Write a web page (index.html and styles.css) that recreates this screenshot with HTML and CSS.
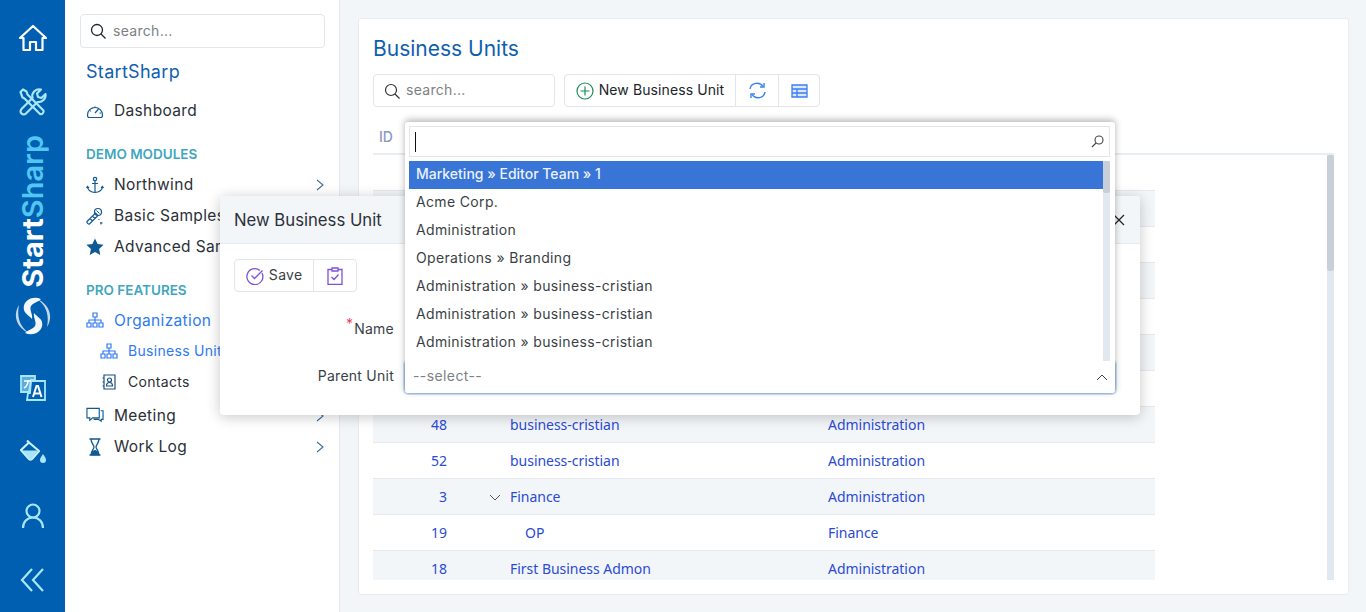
FILE: index.html
```html
<!DOCTYPE html>
<html lang="en">
<head>
<meta charset="UTF-8" />
<title>Business Units</title>
<link rel="stylesheet" href="styles.css">
</head>
<body>
<div class="rail">
    <div class="rail-item"><svg width="30" height="30" viewBox="0 0 30 30" fill="none" stroke="#fff" stroke-width="2.2" stroke-linejoin="round"><path d="M2 15 15 3l13 12h-3.500v12H18v-8h-6v8H5.500V15z"/></svg></div>
    <div class="rail-item"><svg width="30" height="30" viewBox="0 0 30 30" fill="none" stroke="#a8e6fa" stroke-width="2.200" stroke-linejoin="round" stroke-linecap="round"><path d="M2.500 5 5 2.500l3.500 2 1 3 16 16a2.800 2.800 0 0 1-3.500 3.500L6.500 11.500l-2-1z"/><path d="M27.500 7l-4 4-3.500-1-1-3.500 4-4a7 7 0 0 0-8.500 8.500L3.500 22a3 3 0 0 0 4.500 4.500l11.500-11.500a7 7 0 0 0 8-8z"/></svg></div>
    <div class="rail-brand"><span class="brand-text">Start<span class="brand-accent">Sharp</span></span></div>
    <div class="rail-logo"><svg width="40" height="40" viewBox="0 0 40 40" fill="#f2f8fd"><path d="M28 3C18-1 9 6 11 14c1 4 6 6 8 9 1-5-3-9-1-13 2-3 7-4 10-7z"/><path d="M12 37c10 4 19-3 17-11-1-4-6-6-8-9-1 5 3 9 1 13-2 3-7 4-10 7z"/><path d="M6 9C-1 20 4 33 18 38 9 33 3 24 6 9z" opacity=".8"/><path d="M34 31c7-11 2-24-12-29 9 5 15 14 12 29z" opacity=".8"/><g fill="#0a66b3"><circle cx="20" cy="13" r="1.300"/><circle cx="24" cy="16" r="1.300"/><circle cx="16" cy="24" r="1.300"/><circle cx="20" cy="27" r="1.300"/></g></svg></div>
    <div class="rail-item"><svg width="28" height="28" viewBox="0 0 28 28" fill="none" stroke="#a8e6fa" stroke-width="1.800" stroke-linejoin="miter"><path d="M2 2h14v4h-4l-2 12H2z" fill="#5aaede"/><path d="M12 7h14v19H8l1-7h2z"/><path d="M5 7h7M9 6c0 4-2 7-4 8" stroke="#fff" stroke-width="1.600"/><path d="M14 23l3.500-11h1.500l3.500 11M15.500 19.500h5" stroke="#fff" stroke-width="2"/></svg></div>
    <div class="rail-item"><svg width="28" height="28" viewBox="0 0 28 28" fill="none" stroke="#c9f0fc" stroke-width="2.200" stroke-linejoin="round"><path d="M8 2.500 10.500 5M10 4.500 2 12l8 9c1 1 2 1 3 0l7-8z"/><path d="M3.500 12.500h15.500L13 20.500c-1 1-2 1-3 0z" fill="#a8e6fa" stroke="none"/><path d="M24 16c-2 3-3 4.500-3 6a3 3 0 0 0 6 0c0-1.500-1-3-3-6z" fill="#a8e6fa" stroke="none"/></svg></div>
    <div class="rail-item"><svg width="28" height="28" viewBox="0 0 28 28" fill="none" stroke="#a8e6fa" stroke-width="2.200"><circle cx="14" cy="9" r="6.500"/><path d="M4 26c0-6 4-10.500 10-10.500S24 20 24 26"/></svg></div>
    <div class="rail-item"><svg width="26" height="26" viewBox="0 0 26 26" fill="none" stroke="#a8e6fa" stroke-width="2.200"><path d="M12 2 2 13l10 11M23 2 13 13l10 11"/></svg></div>
</div>

<div class="sidebar">
    <div class="search side-search">
        <svg class="search-icon" width="16" height="16" viewBox="0 0 16 16" fill="none" stroke="#1c2733" stroke-width="1.300"><circle cx="7" cy="7" r="5.500"/><path d="m11 11 4.500 4.500"/></svg>
        <span class="placeholder">search...</span>
    </div>
    <div class="side-title">StartSharp</div>
    <div class="nav-item nav-dash">
        <svg class="nav-icon" width="18" height="18" viewBox="0 0 18 18" fill="none" stroke="#0f5a94" stroke-width="1.200"><path d="M1.500 13a7.500 7.500 0 1 1 15 0c0 1.500-.5 2.500-1.500 2.500H3c-1 0-1.500-1-1.500-2.500z"/><path d="M9 11l3.500-4M4 9h1M13.500 11H15M6 6l.500.500M9 4.500V5"/></svg>
        Dashboard
    </div>
    <div class="nav-head nav-head-demo">DEMO MODULES</div>
    <div class="nav-item">
        <svg class="nav-icon" width="18" height="18" viewBox="0 0 18 18" fill="none" stroke="#0f5a94" stroke-width="1.200"><circle cx="9" cy="3" r="1.700"/><path d="M9 5v11.500M6 7.500h6M1.500 10.500c0 3.500 3.500 6 7.500 6s7.500-2.500 7.500-6M.5 12l1-1.500L3 12M15 12l1.500-1.500L17.500 12"/></svg>
        Northwind
        <svg class="chev" width="8" height="12" viewBox="0 0 8 12" fill="none" stroke="#3f6f9b" stroke-width="1.100"><path d="m1 1 6 5-6 5"/></svg>
    </div>
    <div class="nav-item">
        <svg class="nav-icon" width="18" height="18" viewBox="0 0 18 18" fill="none" stroke="#0f5a94" stroke-width="1.200"><path d="M1 14.500 9.500 6l2.500 2.500L3.500 17c-1 .5-3-1.500-2.500-2.500zM4 11.500l2.500 2.500M6.500 9l2.500 2.500"/><circle cx="12" cy="5" r="3.500"/><path d="M10.500 3.500l3 3M15 15v2.500M14 16h2.500M12.500 12.500h1" stroke-width="1"/></svg>
        Basic Samples
    </div>
    <div class="nav-item">
        <svg class="nav-icon" width="18" height="18" viewBox="0 0 18 18" fill="#0f5a94"><path d="m9 .5 2.600 5.600 6 .7-4.500 4.100 1.200 6L9 14l-5.300 2.900 1.200-6L.4 6.800l6-.7z"/></svg>
        Advanced Samples
    </div>
    <div class="nav-head nav-head-pro">PRO FEATURES</div>
    <div class="nav-item nav-active nav-org">
        <svg class="nav-icon" width="18" height="16" viewBox="0 0 18 16" fill="none" stroke="#2f7bf0" stroke-width="1.200"><path d="M7 1h4v4H7zM1 11h4v4H1zM7 11h4v4H7zM13 11h4v4h-4zM9 5v6M3 11V8h12v3"/></svg>
        Organization
    </div>
    <div class="nav-sub nav-active">
        <svg class="nav-icon" width="18" height="16" viewBox="0 0 18 16" fill="none" stroke="#2f7bf0" stroke-width="1.200"><path d="M7 1h4v4H7zM1 11h4v4H1zM7 11h4v4H7zM13 11h4v4h-4zM9 5v6M3 11V8h12v3"/></svg>
        Business Units
    </div>
    <div class="nav-sub nav-sub-last">
        <svg class="nav-icon" width="18" height="16" viewBox="0 0 18 16" fill="none" stroke="#1d4f80" stroke-width="1.200"><path d="M4 1h11v14H4zM2.500 4h2M2.500 8h2M2.500 12h2"/><circle cx="9.500" cy="6" r="2"/><path d="M6.500 12c0-2 1-3.500 3-3.500s3 1.500 3 3.500z"/></svg>
        Contacts
    </div>
    <div class="nav-item">
        <svg class="nav-icon" width="19" height="18" viewBox="0 0 19 18" fill="none" stroke="#0f5a94" stroke-width="1.200"><path d="M1 1h13v10H7l-3 2.500V11H1zM15.500 3.500H18v9h-2v2l-3-2H8"/></svg>
        Meeting
        <svg class="chev" width="8" height="12" viewBox="0 0 8 12" fill="none" stroke="#3f6f9b" stroke-width="1.100"><path d="m1 1 6 5-6 5"/></svg>
    </div>
    <div class="nav-item">
        <svg class="nav-icon" width="18" height="18" viewBox="0 0 18 18" fill="none" stroke="#0f5a94" stroke-width="1.300"><path d="M3.500 1h11M3.500 17h11M5 1c0 4 3 6 3 8s-3 4-3 8M13 1c0 4-3 6-3 8s3 4 3 8"/><path d="M5.500 16.500c0-2 2-3.500 3.500-4 1.500.5 3.500 2 3.500 4z" fill="#0f5a94"/></svg>
        Work Log
        <svg class="chev" width="8" height="12" viewBox="0 0 8 12" fill="none" stroke="#3f6f9b" stroke-width="1.100"><path d="m1 1 6 5-6 5"/></svg>
    </div>
</div>

<div class="main">
    <div class="card">
        <h1 class="page-title">Business Units</h1>
        <div class="toolbar">
            <div class="search main-search">
                <svg class="search-icon" width="16" height="16" viewBox="0 0 16 16" fill="none" stroke="#333" stroke-width="1.200"><circle cx="7" cy="7" r="5.500"/><path d="m11 11 4.500 4.500"/></svg>
                <span class="placeholder">search...</span>
            </div>
            <div class="btn-group">
                <div class="btn btn-new">
                    <svg width="18" height="18" viewBox="0 0 18 18" fill="none" stroke="#1f8a5b" stroke-width="1.200"><circle cx="9" cy="9" r="8"/><path d="M9 4.500v9M4.500 9h9"/></svg>
                    <span class="btn-text">New Business Unit</span>
                </div>
                <div class="btn btn-refresh">
                    <svg width="17" height="17" viewBox="0 0 17 17" fill="none" stroke="#3b82f0" stroke-width="1.400"><path d="M1 7a7 6.500 0 0 1 13-2.500M16 10a7 6.500 0 0 1-13 2.500"/><path d="M15 1v4h-4M2 16v-4h4"/></svg>
                </div>
                <div class="btn btn-cols">
                    <svg width="17" height="14" viewBox="0 0 17 14" fill="#dbe7fd" stroke="#3b7df0" stroke-width="1.300"><path d="M1 1h15v12H1zM1 5h15M1 9h15M6 5v8"/></svg>
                </div>
            </div>
        </div>
        <div class="grid">
            <div class="grid-head"><span class="col-id-head">ID</span></div>
            <div class="grid-body">
                <div class="rows">
                    <div class="row"></div>
                    <div class="row"></div>
                    <div class="row"></div>
                    <div class="row"></div>
                    <div class="row"></div>
                    <div class="row"></div>
                    <div class="row"></div>
                    <div class="row"><span class="c-id">48</span><span class="c-name">business-cristian</span><span class="c-parent">Administration</span></div>
                    <div class="row"><span class="c-id">52</span><span class="c-name">business-cristian</span><span class="c-parent">Administration</span></div>
                    <div class="row"><span class="c-id">3</span><span class="c-name"><svg class="tree-chev" width="12" height="7" viewBox="0 0 12 7" fill="none" stroke="#555" stroke-width="1"><path d="m1 1 5 5 5-5"/></svg>Finance</span><span class="c-parent">Administration</span></div>
                    <div class="row"><span class="c-id">19</span><span class="c-name c-child">OP</span><span class="c-parent">Finance</span></div>
                    <div class="row"><span class="c-id">18</span><span class="c-name">First Business Admon</span><span class="c-parent">Administration</span></div>
                </div>
                <div class="vscroll"><div class="vthumb"></div></div>
            </div>
        </div>
    </div>
</div>

<div class="modal">
    <div class="modal-head">
        <span class="modal-title">New Business Unit</span>
        <svg width="14" height="14" viewBox="0 0 14 14" fill="none" stroke="#222" stroke-width="1.200"><path d="m2 2 10 10M12 2 2 12"/></svg>
    </div>
    <div class="modal-body">
        <div class="btn-group modal-tools">
            <div class="btn btn-save">
                <svg width="18" height="18" viewBox="0 0 18 18" fill="none" stroke="#7c52d6" stroke-width="1.300"><path d="M16 6a8 8 0 1 1-2-2.500"/><path d="m5.500 8.500 3 3L16.500 3.500"/></svg>
                <span class="btn-text">Save</span>
            </div>
            <div class="btn btn-clip">
                <svg width="16" height="18" viewBox="0 0 16 18" fill="none" stroke="#7c52d6" stroke-width="1.300"><path d="M5 2.500H1v15h14v-15h-4M5 1h6v3H5zM4.500 10l2.500 2.500 4.500-5"/></svg>
            </div>
        </div>
        <div class="field field-name">
            <label class="field-label"><span class="req">*</span>Name</label>
        </div>
        <div class="field">
            <label class="field-label">Parent Unit</label>
            <div class="select">
                <span class="select-value">--select--</span>
                <svg class="select-chev" width="12" height="7" viewBox="0 0 12 7" fill="none" stroke="#444" stroke-width="1"><path d="m1 6 5-5 5 5"/></svg>
                <div class="drop">
                    <div class="drop-search">
                        <span class="caret"></span>
                        <svg width="13" height="13" viewBox="0 0 13 13" fill="none" stroke="#444" stroke-width="1.100"><circle cx="8" cy="5" r="4"/><path d="M5 8 1 12"/></svg>
                    </div>
                    <div class="drop-list">
                        <div class="drop-items">
                            <div class="drop-item drop-sel">Marketing » Editor Team » 1</div>
                            <div class="drop-item">Acme Corp.</div>
                            <div class="drop-item">Administration</div>
                            <div class="drop-item">Operations » Branding</div>
                            <div class="drop-item">Administration » business-cristian</div>
                            <div class="drop-item">Administration » business-cristian</div>
                            <div class="drop-item">Administration » business-cristian</div>
                        </div>
                        <div class="drop-scroll"><div class="drop-thumb"></div></div>
                    </div>
                </div>
            </div>
        </div>
    </div>
</div>
</body>
</html>
```

FILE: styles.css
```css
* {
    box-sizing: border-box;
}

html, body {
    height: 100%;
}

body {
    margin: 0;
    display: flex;
    height: 612px;
    overflow: hidden;
    background-color: #f3f6f9;
    font-family: Inter, "Liberation Sans", sans-serif;
    font-size: 14px;
    color: #2b3038;
}

/* left rail */
.rail {
    width: 65px;
    flex: none;
    padding-top: 6px;
    background-color: #005fb0;
    display: flex;
    flex-direction: column;
    align-items: center;
}

.rail-item {
    height: 64px;
    width: 100%;
    flex: none;
    display: flex;
    align-items: center;
    justify-content: center;
}

.rail-brand {
    height: 154px;
    flex: none;
    display: flex;
    align-items: center;
    justify-content: center;
}

.brand-text {
    writing-mode: vertical-rl;
    transform: rotate(180deg);
    font-size: 29px;
    font-weight: 700;
    color: #fff;
    line-height: 1;
}

.brand-accent {
    color: #52c6f2;
    font-weight: 600;
}

.rail-logo {
    height: 68px;
    flex: none;
    display: flex;
    align-items: center;
    justify-content: center;
    padding-bottom: 12px;
}

/* sidebar */
.sidebar {
    width: 275px;
    flex: none;
    background-color: #fff;
    border-right: 1px solid #e6eaef;
    padding: 14px 14px 0 15px;
}

.search {
    display: flex;
    align-items: center;
    border: 1px solid #e2e5e9;
    border-radius: 4px;
    background-color: #fff;
}

.side-search {
    height: 34px;
    padding-left: 9px;
}

.main-search {
    width: 182px;
    height: 33px;
    padding-left: 10px;
}

.search-icon {
    margin-right: 7px;
    flex: none;
}

.main-search .search-icon {
    margin-right: 6px;
}

.placeholder {
    color: #7d7f85;
    font-size: 14px;
    letter-spacing: 0.3px;
    padding-bottom: 2px;
}

.side-title {
    margin: 13px 0 0 6px;
    height: 22px;
    line-height: 22px;
    font-size: 18px;
    color: #0f5fb0;
    letter-spacing: 0.3px;
}

.nav-item {
    display: flex;
    align-items: center;
    height: 31px;
    padding-left: 6px;
    font-size: 15.500px;
    letter-spacing: 0.35px;
    white-space: nowrap;
}

.nav-dash {
    margin-top: 12px;
}

.nav-org {
    height: 30px;
}

.nav-icon {
    width: 18px;
    margin-right: 10px;
    flex: none;
}

.chev {
    margin-left: auto;
    margin-right: 1px;
}

.nav-head {
    height: 20px;
    line-height: 20px;
    padding-left: 6px;
    font-size: 13.500px;
    font-weight: 600;
    color: #3fa7bd;
}

.nav-head-demo {
    margin-top: 18px;
    margin-bottom: 5px;
}

.nav-head-pro {
    margin-top: 18px;
    margin-bottom: 5px;
}

.nav-sub {
    display: flex;
    align-items: center;
    height: 31px;
    padding-left: 20px;
    font-size: 14px;
    letter-spacing: 0.3px;
    white-space: nowrap;
}

.nav-sub-last {
    margin-bottom: 3px;
}

.nav-active {
    color: #2f7bf0;
}

/* main */
.main {
    flex: 1;
    padding: 18px 17px 17px 18px;
}

.card {
    height: 577px;
    background-color: #fff;
    border: 1px solid #e8ecf1;
    border-radius: 3px;
    padding: 0 14px 15px 14px;
}

.page-title {
    margin: 15px 0 0 0;
    height: 29px;
    line-height: 29px;
    font-size: 21px;
    font-weight: 400;
    color: #0f5fb0;
}

.toolbar {
    display: flex;
    gap: 9px;
    margin-top: 11px;
}

.btn-group {
    display: flex;
    height: 33px;
    border: 1px solid #e2e5e9;
    border-radius: 4px;
    background-color: #fff;
}

.btn {
    display: flex;
    align-items: center;
    justify-content: center;
    border-left: 1px solid #e2e5e9;
}

.btn:first-child {
    border-left: 0;
}

.btn-text {
    padding-bottom: 2px;
}

.btn-new {
    width: 170px;
    gap: 5px;
    font-size: 14px;
    letter-spacing: 0.1px;
    color: #20252b;
}

.btn-refresh {
    width: 43px;
}

.btn-cols {
    width: 41px;
}

/* grid */
.grid {
    margin-top: 15px;
    width: 961px;
}

.grid-head {
    height: 33px;
    border-bottom: 2px solid #e9eef3;
    padding: 6px 0 0 6px;
    color: #8b98bf;
    font-size: 14px;
    font-weight: 500;
}

.grid-body {
    display: flex;
    height: 425px;
    overflow: hidden;
}

.rows {
    width: 782px;
    flex: none;
    margin-right: 172px;
}

.row {
    display: flex;
    align-items: center;
    height: 36px;
    border-bottom: 1px solid #e6e9ee;
    font-family: "Noto Sans", "Open Sans", sans-serif;
    font-size: 14px;
    letter-spacing: -0.03px;
    color: #2b4ad6;
}

.row:nth-child(even) {
    background-color: #f3f6f9;
}

.c-id {
    width: 74px;
    text-align: right;
}

.c-name {
    position: relative;
    width: 318px;
    margin-left: 63px;
}

.c-child {
    padding-left: 15px;
}

.tree-chev {
    position: absolute;
    left: -21px;
    top: 7px;
}

.vscroll {
    width: 7px;
    flex: none;
    background-color: #e2e8f0;
}

.vthumb {
    height: 116px;
    background-color: #c8cfd8;
    border-radius: 2px;
}

/* modal */
.modal {
    position: absolute;
    left: 220px;
    top: 196px;
    width: 920px;
    height: 219px;
    background-color: #fff;
    border-radius: 4px;
    box-shadow: 0 2px 14px rgba(0, 0, 0, 0.22);
}

.modal-head {
    display: flex;
    align-items: center;
    justify-content: space-between;
    height: 48px;
    padding: 0 14px;
    background-color: #f3f6f9;
    border-bottom: 1px solid #e6eaef;
    border-radius: 4px 4px 0 0;
}

.modal-title {
    font-size: 16.700px;
    color: #2b3038;
}

.modal-body {
    padding: 15px 24px 0 14px;
}

.modal-tools {
    width: 123px;
}

.btn-save {
    width: 79px;
    gap: 5px;
    color: #3a3f46;
    font-size: 14px;
    letter-spacing: 0.3px;
}

.btn-clip {
    width: 43px;
}

.field {
    display: flex;
    align-items: center;
    height: 34px;
}

.field-name {
    margin-top: 21px;
    margin-bottom: 13px;
}

.field-label {
    width: 160px;
    margin-right: 10px;
    padding-bottom: 4px;
    text-align: right;
    font-size: 14px;
    letter-spacing: 0.25px;
    color: #3a3f46;
}

.req {
    color: #e8465f;
    position: relative;
    top: -5px;
    margin-right: 1px;
}

.select {
    position: relative;
    flex: 1;
    display: flex;
    align-items: center;
    justify-content: space-between;
    height: 34px;
    padding: 0 7px 0 8px;
    border: 1px solid #a9c8ec;
    border-radius: 4px;
    box-shadow: 0 0 0 1px #cfe0f4;
}

.select-value {
    position: relative;
    z-index: 2;
    padding-bottom: 3px;
    color: #7d7f85;
    letter-spacing: 0.4px;
}

.select-chev {
    position: relative;
    z-index: 2;
}

.drop {
    position: absolute;
    left: 0;
    right: 0;
    bottom: 0;
    height: 271px;
    padding: 4px 5px 0 4px;
    background-color: #fff;
    border-radius: 3px;
    box-shadow: 0 -2px 7px rgba(0, 0, 0, 0.3);
}

.drop-search {
    display: flex;
    align-items: center;
    justify-content: space-between;
    height: 31px;
    padding: 0 5px;
    border: 1px solid #e2e5e9;
}

.caret {
    width: 1px;
    height: 20px;
    background-color: #111;
}

.drop-list {
    display: flex;
    height: 200px;
    margin-top: 4px;
}

.drop-items {
    flex: 1;
}

.drop-item {
    height: 28px;
    line-height: 26px;
    padding-left: 7px;
    color: #3a3f46;
    font-size: 14px;
    letter-spacing: 0.35px;
}

.drop-sel {
    background-color: #3875d7;
    color: #eaf1fb;
    font-weight: 500;
    letter-spacing: 0;
}

.drop-scroll {
    width: 7px;
    background-color: #e2e8f0;
}

.drop-thumb {
    height: 32px;
    background-color: #c8cfd8;
    border-radius: 2px;
}
```
